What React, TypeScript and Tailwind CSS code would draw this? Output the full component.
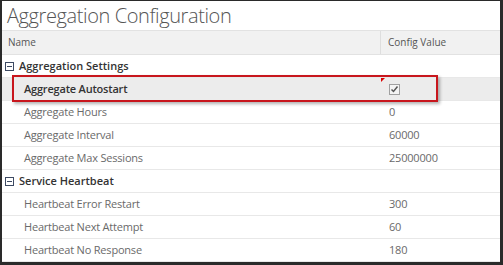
import React from "react";

type Row = { name: string; value: string };

const groups: { title: string; rows: Row[] }[] = [
  {
    title: "Aggregation Settings",
    rows: [
      { name: "Aggregate Autostart", value: "check" },
      { name: "Aggregate Hours", value: "0" },
      { name: "Aggregate Interval", value: "60000" },
      { name: "Aggregate Max Sessions", value: "25000000" },
    ],
  },
  {
    title: "Service Heartbeat",
    rows: [
      { name: "Heartbeat Error Restart", value: "300" },
      { name: "Heartbeat Next Attempt", value: "60" },
      { name: "Heartbeat No Response", value: "180" },
    ],
  },
];

const CollapseIcon = () => (
  <svg width="9" height="9" viewBox="0 0 9 9" className="shrink-0">
    <rect x="0.5" y="0.5" width="8" height="8" fill="#fff" stroke="#3d4a63" />
    <rect x="2" y="4" width="5" height="1" fill="#3d4a63" />
  </svg>
);

const CheckBox = () => (
  <svg width="11" height="11" viewBox="0 0 11 11">
    <rect x="0.5" y="0.5" width="10" height="10" fill="#f4f4f4" stroke="#a0a0a0" />
    <path d="M2.5 5.5 L4.5 7.5 L8.5 2.5" fill="none" stroke="#555" strokeWidth="1.5" />
  </svg>
);

export default function App() {
  return (
    <div
      className="w-[503px] h-[265px] bg-white border-l-2 border-t border-r-[3px] border-b-[3px] border-[#2a2a2a] overflow-hidden"
      style={{ fontFamily: '"Open Sans", "Liberation Sans", sans-serif' }}
    >
      <div className="h-[29px] pl-[5px] text-[20px] leading-[29px] font-light tracking-[-0.4px] text-[#555]">
        Aggregation Configuration
      </div>
      <div className="flex h-[25px] bg-[#f1f1f1] border-t border-b border-[#e2e2e2] text-[10px] text-[#555]">
        <div className="w-[379px] pl-[6px] flex items-center border-r border-[#dedede]">Name</div>
        <div className="flex-1 pl-[7px] flex items-center">Config Value</div>
      </div>
      {groups.map((g) => (
        <div key={g.title}>
          <div className="flex items-center gap-[5px] h-[23px] pl-[3px] border-b border-[#e8e8e8] text-[11px] font-semibold text-[#333]">
            <CollapseIcon />
            {g.title}
          </div>
          {g.rows.map((r) => {
            const selected = r.value === "check";
            return (
              <div
                key={r.name}
                className={`relative flex h-[23px] border-b border-[#e8e8e8] text-[11px] tracking-[-0.2px] ${
                  selected ? "bg-[#ececec] text-[#333] font-semibold" : "text-[#6a6a6a]"
                }`}
              >
                <div className="w-[379px] pl-[22px] flex items-center">{r.name}</div>
                <div className="relative flex-1 pl-[8px] flex items-center">
                  {selected ? (
                    <>
                      <div className="absolute left-0 top-0 w-0 h-0 border-t-[4px] border-r-[4px] border-t-[#d00] border-r-transparent" />
                      <CheckBox />
                    </>
                  ) : (
                    r.value
                  )}
                </div>
                {selected && (
                  <div className="absolute left-[10px] top-[-3px] w-[426px] h-[27px] border-2 border-[#c8161d] shadow-[2px_2px_3px_rgba(0,0,0,0.3)] pointer-events-none" />
                )}
              </div>
            );
          })}
        </div>
      ))}
    </div>
  );
}
